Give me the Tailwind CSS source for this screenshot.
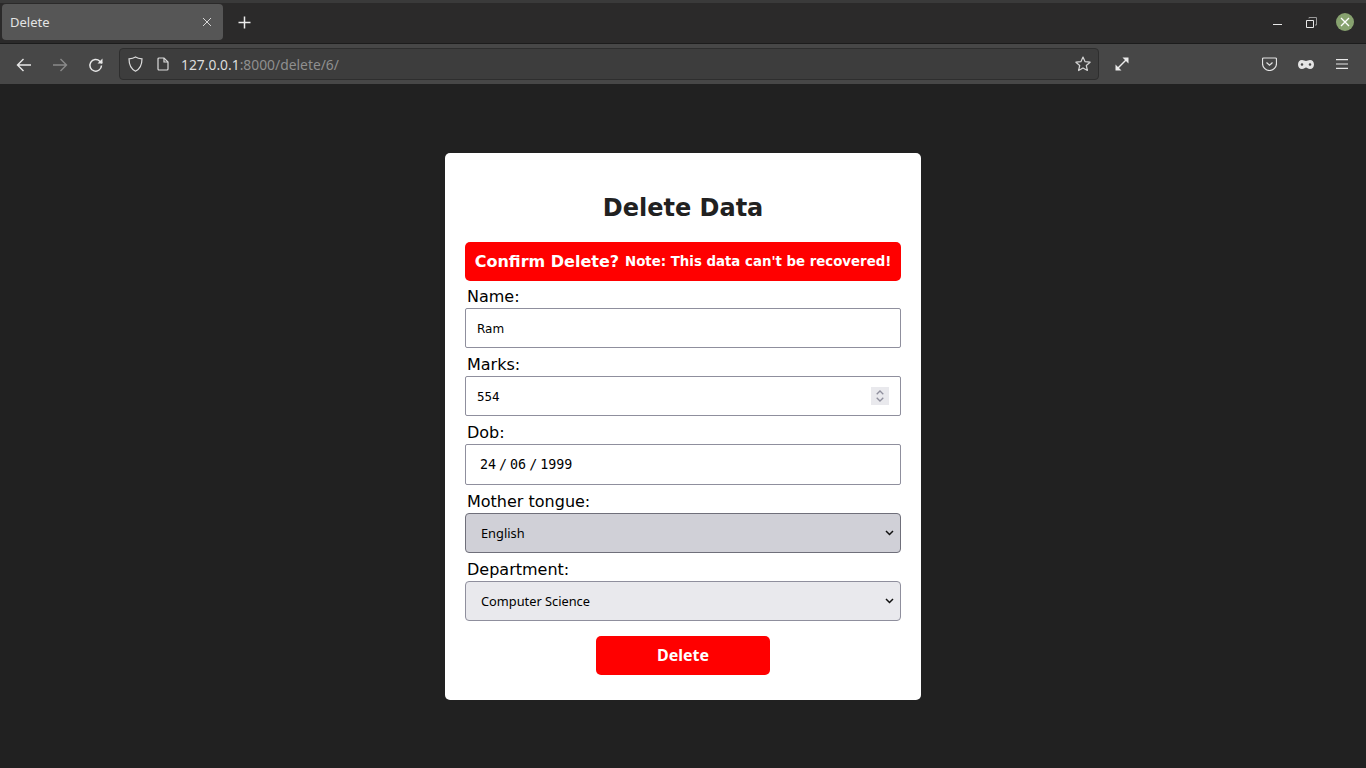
<!DOCTYPE html>
<html lang="en">
  <head>
    <meta charset="UTF-8" />
    <title>Delete</title>
    <script src="https://cdn.jsdelivr.net/npm/@tailwindcss/browser@4"></script>
  </head>
  <body class="h-[768px] overflow-hidden bg-[#212121] font-['DejaVu_Sans',sans-serif]">
    <!-- Browser tabs -->
    <div class="h-[44px] border-t-[3px] border-b border-[#3a3a3a] border-b-[#1c1c1c] bg-[#2b2a2a] flex items-center pl-[2px] pr-[12px] pb-[2px] font-['Noto_Sans',sans-serif]">
      <div class="w-[221px] h-[36px] rounded-[4px] bg-[#565656] flex items-center justify-between pl-[8px] pr-[11px] text-[13px] text-[#e4e4e4]">
        <span class="pt-[2px]">Delete</span>
        <svg class="w-[10px] h-[10px]" viewBox="0 0 10 10" fill="none" stroke="#d6d6d6" stroke-width="1"><path d="M1 1l8 8M9 1l-8 8"/></svg>
      </div>
      <svg class="ml-[15px] w-[13px] h-[13px]" viewBox="0 0 13 13" fill="none" stroke="#ececec" stroke-width="1.5"><path d="M6.5 0.5v12M0.5 6.5h12"/></svg>
      <div class="ml-auto flex items-center">
        <div class="w-[9px] h-[1px] bg-[#e8e8e8] mt-[5px]"></div>
        <svg class="ml-[24px] w-[11px] h-[11px]" viewBox="0 0 11 11" fill="none" stroke="#e8e8e8"><path d="M0.5 3.5h7v7h-7z"/><path d="M3 1.5V0.5h7.5V8H9" stroke="#9a9a9a"/></svg>
        <div class="ml-[19px] w-[18px] h-[18px] rounded-full bg-[#87a26f] flex items-center justify-center">
          <svg class="w-[10px] h-[10px]" viewBox="0 0 10 10" fill="none" stroke="#ffffff" stroke-width="1.3"><path d="M1 1l8 8M9 1l-8 8"/></svg>
        </div>
      </div>
    </div>

    <!-- Browser toolbar -->
    <div class="h-[40px] bg-[#474747] flex items-center">
      <svg class="ml-[16px] mt-[2px] w-[16px] h-[16px]" viewBox="0 0 16 16" fill="none" stroke="#e8e8e8" stroke-width="1.4"><path d="M15 8H1.5M7.5 2L1.5 8l6 6"/></svg>
      <svg class="ml-[20px] mt-[2px] w-[16px] h-[16px]" viewBox="0 0 16 16" fill="none" stroke="#8a8a8a" stroke-width="1.4"><path d="M1 8h13.5M8.500 2l6 6-6 6"/></svg>
      <svg class="ml-[20px] mt-[2px] w-[16px] h-[16px]" viewBox="0 0 16 16" fill="none" stroke="#e8e8e8" stroke-width="1.500"><path d="M13.500 8.500a5.800 5.800 0 1 1-1.700-4.300L14 6.200"/><path d="M14.500 1.500v5h-5" fill="#e8e8e8" stroke="none"/></svg>
      <div class="ml-[15px] w-[980px] h-[32px] rounded-[4px] border border-[#2e2e2e] bg-[#3d3d3d] flex items-center pl-[8px] pr-[7px]">
        <svg class="w-[15px] h-[16px]" viewBox="0 0 15 16" fill="none" stroke="#dcdcdc" stroke-width="1.200"><path d="M7.500 1C5.500 2.300 3.500 2.700 1 2.800c0 5.500 1.500 10 6.500 12.400 5-2.400 6.500-6.900 6.500-12.400C11.500 2.700 9.500 2.300 7.500 1z"/></svg>
        <svg class="ml-[14px] w-[12px] h-[14px]" viewBox="0 0 12 14" fill="none" stroke="#dcdcdc" stroke-width="1.200"><path d="M1 2a1 1 0 0 1 1-1h5l4 4v7a1 1 0 0 1-1 1H2a1 1 0 0 1-1-1z"/><path d="M7 1v4h4"/></svg>
        <span class="ml-[12px] pt-[2px] text-[13.85px] font-['Noto_Sans',sans-serif] text-[#dcdcdc]">127.0.0.1<span class="text-[#8f8f8f]">:8000/delete/6/</span></span>
        <svg class="ml-auto w-[16px] h-[16px]" viewBox="0 0 16 16" fill="none" stroke="#d4d4d4" stroke-width="1.200" stroke-linejoin="round"><path d="M8 1l2.100 4.700 5 .5-3.800 3.300 1.100 5L8 11.900 3.600 14.500l1.100-5L.9 6.200l5-.5z"/></svg>
      </div>
      <svg class="ml-[16px] w-[14px] h-[14px]" viewBox="0 0 14 14" fill="none" stroke="#ececec" stroke-width="1.500"><path d="M2 12L12 2"/><path d="M7.500 .5h6v6zM6.500 13.500h-6v-6z" fill="#ececec" stroke="none"/></svg>
      <div class="ml-auto flex items-center pr-[18px]">
        <svg class="w-[15px] h-[14px]" viewBox="0 0 15 14" fill="none" stroke="#e4e4e4" stroke-width="1.200"><path d="M1.500 1h12a1 1 0 0 1 1 1v4.500a7 7 0 0 1-14 0V2a1 1 0 0 1 1-1z"/><path d="M4.500 5.500l3 2.800 3-2.800"/></svg>
        <svg class="ml-[21px] w-[16px] h-[9px]" viewBox="0 0 16 9" fill="#e4e4e4"><path fill-rule="evenodd" d="M4 0c1.700 0 2.800 1 4 1s2.300-1 4-1c2.500 0 4 2 4 4.500S14.500 9 12 9C10 9 9 7.500 8 7.500S6 9 4 9C1.500 9 0 7 0 4.500S1.500 0 4 0zm0 3.200a1.300 1.300 0 1 0 0 2.600 1.300 1.300 0 0 0 0-2.600zm8 0a1.300 1.300 0 1 0 0 2.600 1.300 1.300 0 0 0 0-2.600z"/></svg>
        <svg class="ml-[22px] w-[12px] h-[10px]" viewBox="0 0 12 10" fill="none" stroke="#e8e8e8" stroke-width="1.200"><path d="M0 .6h12M0 5h12M0 9.400h12"/></svg>
      </div>
    </div>

    <!-- Delete form card -->
    <div class="w-[476px] h-[547px] mt-[69px] mx-auto bg-white rounded-[5px] px-[20px] pt-[40px]">
      <h1 class="text-center text-[24px] leading-[30px] font-bold text-[#212121]">Delete Data</h1>
      <div class="mt-[19px] h-[39px] rounded-[5px] bg-[#ff0000] flex items-center justify-center gap-[6px] text-white font-bold whitespace-nowrap">
        <span class="text-[16px]">Confirm Delete?</span>
        <span class="text-[13.33px]">Note: This data can't be recovered!</span>
      </div>

      <label class="block pl-[2px] pt-[6px] pb-[2px] text-[16px] leading-[19px] text-black">Name:</label>
      <div class="h-[40px] rounded-[2px] border border-[#8f8f9d] flex items-center pl-[11px] pt-[1px] text-[12px] text-black">Ram</div>

      <label class="block pl-[2px] pt-[7px] pb-[2px] text-[16px] leading-[19px] text-black">Marks:</label>
      <div class="h-[40px] rounded-[2px] border border-[#8f8f9d] flex items-center justify-between pl-[11px] pr-[11px] text-[12.5px] text-black font-['DejaVu_Sans_Mono',monospace]">
        <span class="pt-[2px]">554</span>
        <div class="w-[18px] h-[18px] bg-[#e9e9ed] flex flex-col items-center justify-center gap-[2px]">
          <svg class="w-[8px] h-[5px]" viewBox="0 0 8 5" fill="none" stroke="#8f8f9d" stroke-width="1.300"><path d="M.7 4.300L4 1l3.300 3.300"/></svg>
          <svg class="w-[8px] h-[5px]" viewBox="0 0 8 5" fill="none" stroke="#8f8f9d" stroke-width="1.300"><path d="M.7 .7L4 4l3.300-3.300"/></svg>
        </div>
      </div>

      <label class="block pl-[2px] pt-[7px] pb-[2px] text-[16px] leading-[19px] text-black">Dob:</label>
      <div class="h-[41px] rounded-[2px] border border-[#8f8f9d] flex items-center gap-[3px] pl-[14px] text-[13.33px] text-black font-['DejaVu_Sans_Mono',monospace]">
        <span>24</span><span>/</span><span>06</span><span>/</span><span>1999</span>
      </div>

      <label class="block pl-[2px] pt-[7px] pb-[2px] text-[16px] leading-[19px] text-black">Mother tongue:</label>
      <div class="h-[40px] rounded-[4px] border border-[#6f6f7a] bg-[#d0d0d7] flex items-center justify-between pl-[15px] pr-[6px] text-[12.8px] text-black font-['Noto_Sans',sans-serif]">
        <span class="pt-[1px]">English</span>
        <svg class="w-[9px] h-[6px]" viewBox="0 0 9 6" fill="none" stroke="#111111" stroke-width="1.500"><path d="M1 1l3.500 3.500L8 1"/></svg>
      </div>

      <label class="block pl-[2px] pt-[7px] pb-[2px] text-[16px] leading-[19px] text-black">Department:</label>
      <div class="h-[40px] rounded-[4px] border border-[#8f8f9d] bg-[#e9e9ed] flex items-center justify-between pl-[15px] pr-[6px] text-[12.8px] text-black font-['Noto_Sans',sans-serif]">
        <span class="pt-[1px]">Computer Science</span>
        <svg class="w-[9px] h-[6px]" viewBox="0 0 9 6" fill="none" stroke="#111111" stroke-width="1.500"><path d="M1 1l3.500 3.500L8 1"/></svg>
      </div>

      <button class="block mx-auto mt-[15px] w-[174px] h-[39px] pb-[2px] rounded-[5px] bg-[#ff0000] text-white text-[16px] font-bold font-['Noto_Sans',sans-serif]">Delete</button>
    </div>
  </body>
</html>
